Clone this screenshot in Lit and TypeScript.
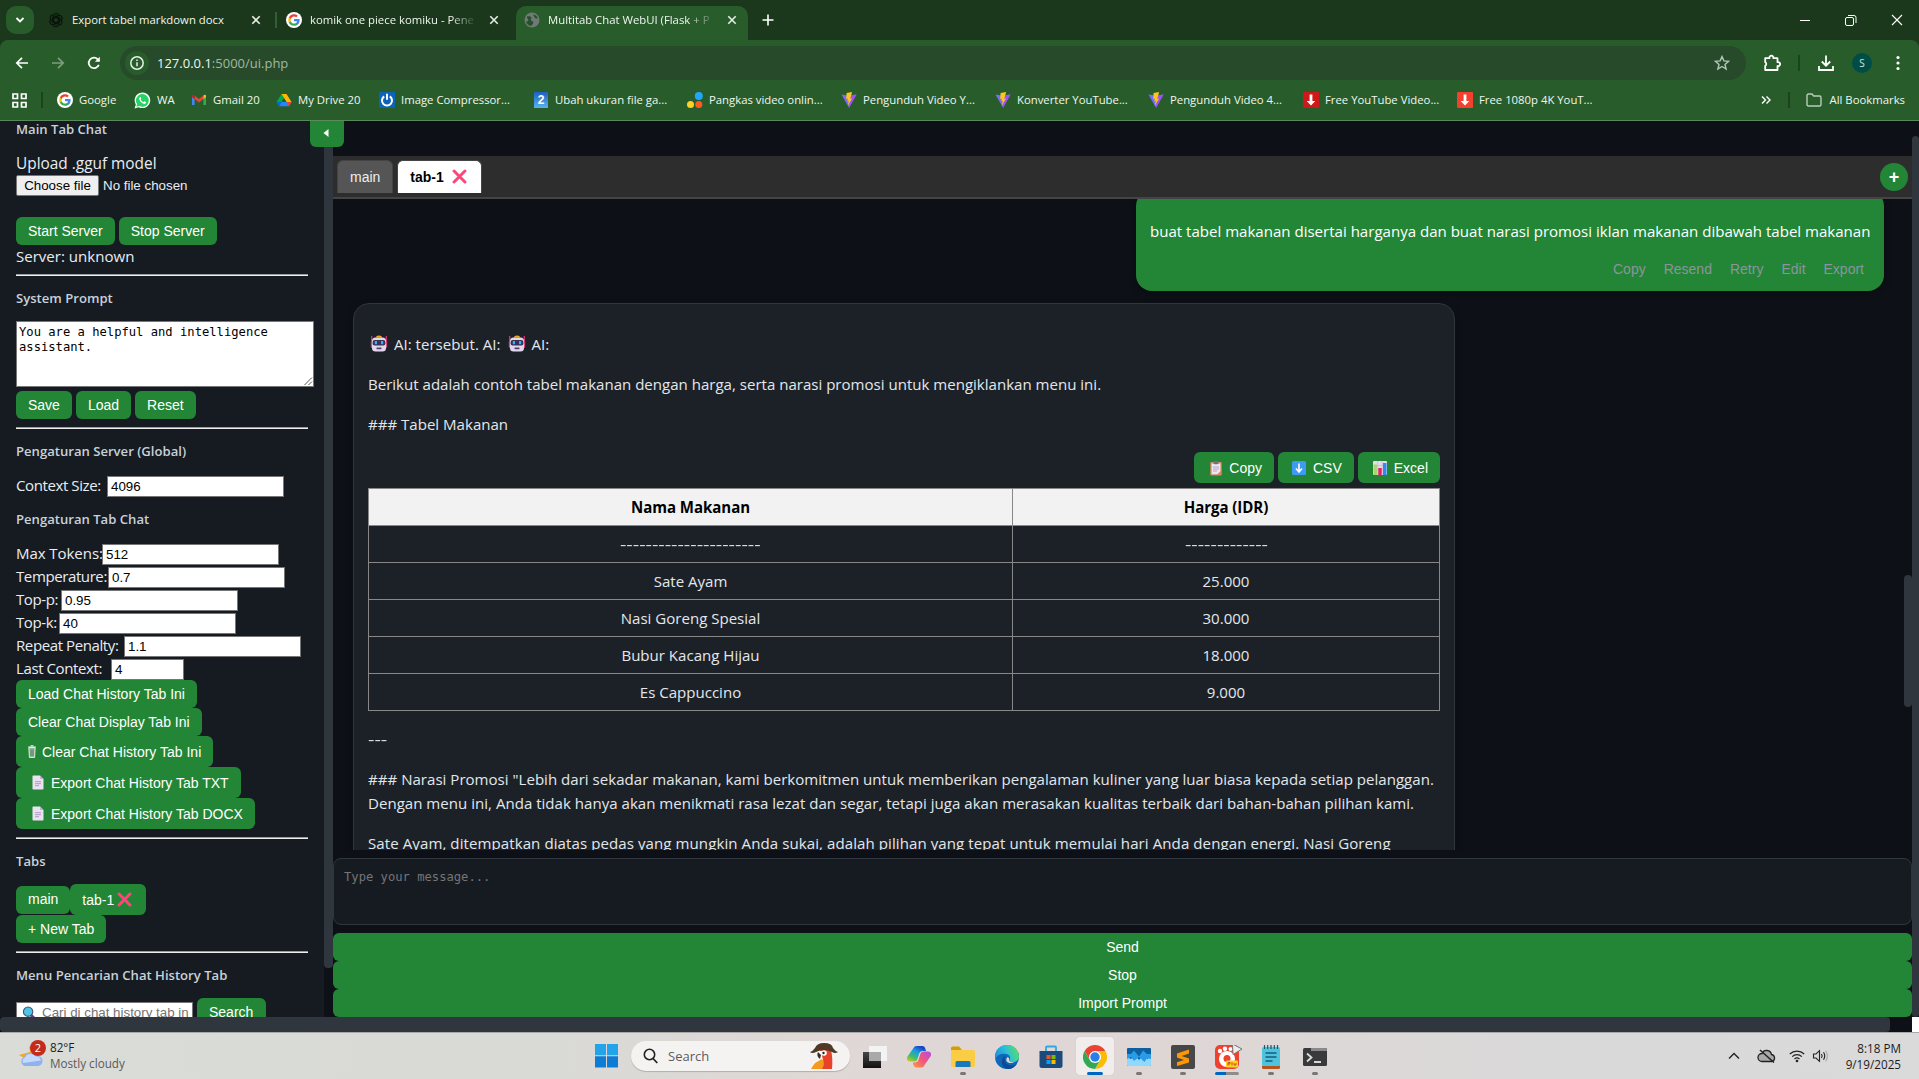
import { LitElement, html, svg, css, TemplateResult } from "lit";
import { customElement } from "lit/decorators.js";
import { classMap } from "lit/directives/class-map.js";

/* ---------- icon helpers ---------- */
const box = (w: number, h: number, vb: string, body: unknown) =>
  html`<svg width=${w} height=${h} viewBox=${vb} fill="none">${body}</svg>`;

const google = box(16, 16, "0 0 20 20", svg`
  <circle cx="10" cy="10" r="10" fill="#fff"/>
  <path d="M17 10.2c0-.5 0-1-.1-1.4H10v2.8h3.9a3.4 3.4 0 0 1-1.4 2.2v1.8h2.3c1.4-1.3 2.2-3.1 2.2-5.4z" fill="#4285f4"/>
  <path d="M10 17.2c1.9 0 3.500-.6 4.800-1.700l-2.400-1.800c-.6.4-1.400.7-2.400.7-1.900 0-3.400-1.200-4-2.900H3.600v1.900A7.200 7.200 0 0 0 10 17.200z" fill="#34a853"/>
  <path d="M6 11.500a4.300 4.300 0 0 1 0-2.900V6.700H3.600a7.200 7.200 0 0 0 0 6.600z" fill="#fbbc05"/>
  <path d="M10 5.600c1.100 0 2 .4 2.800 1.100l2-2A7.200 7.200 0 0 0 3.600 6.700L6 8.600c.6-1.800 2.100-3 4-3z" fill="#ea4335"/>`);
const openai = box(16, 16, "0 0 16 16", svg`<g stroke="#0a150b" stroke-width="1.300">
  ${[0, 60, 120, 180, 240, 300].map((a) => svg`<path transform=${`rotate(${a} 8 8)`} d="M5.400 8.200V4.200a2.900 2.900 0 0 1 5.300-1.500M5.400 6.600l3.500-2 3.300 1.900"/>`)}</g>`);
const globe = box(16, 16, "0 0 16 16", svg`<circle cx="8" cy="8" r="7.500" fill="#6f7a75"/>
  <path d="M3 4.500c2-.6 3.600-.2 4.400 1 .5 1-1 1.700-.6 2.700.5 1 2.300.6 2.500 2 .2 1.300-1 2.200-2.200 3.800C4 13.500 2.500 11.500 2 9.500c1.500.2 2.500-.4 2.300-1.600C4.200 6.800 2.600 6.400 3 4.500zM9.500 2.500c2 .4 3.600 1.700 4.200 3.700-1.200.5-2.400.2-3-.8-.5-.9-1.600-1.600-1.200-2.900z" fill="#2a4f2f"/>`);
const whatsapp = box(17, 17, "0 0 17 17", svg`<path d="M.6 16.400l1.200-4A7.800 7.800 0 1 1 4.800 15.200z" fill="#fff"/>
  <path d="M2.300 14.800l.8-2.700A6.400 6.400 0 1 1 5.200 14z" fill="#25d366"/>
  <path d="M6.200 5c-.6.200-1.100.9-1 1.800.3 2 2.700 4.700 4.900 5.100.9.100 1.700-.4 1.900-1.100l.1-.6-1.800-.9-.9.900c-1.200-.4-2.300-1.500-2.800-2.600l.7-.9L6.700 5z" fill="#fff"/>`);
const gmail = box(16, 16, "0 0 16 16", svg`<path d="M1 3.800V13h2.600V7z" fill="#4285f4"/><path d="M15 3.800V13h-2.600V7z" fill="#34a853"/>
  <path d="M3.600 3.500L8 6.900l4.400-3.400v3.600L8 10.500 3.600 7.100z" fill="#ea4335"/><path d="M1 3.800C1 2.600 2.500 2.400 3.600 3.500v3.600L1 5.300z" fill="#c5221f"/><path d="M15 3.800c0-1.200-1.500-1.400-2.600-.3v3.600L15 5.300z" fill="#fbbc04"/>`);
const drive = box(16, 16, "0 0 16 16", svg`<path d="M5.500 2L.6 10l2.500 4.200L8 6.200z" fill="#00ac47"/>
  <path d="M5.500 2h5l5 8h-5z" fill="#ffba00"/><path d="M5.600 10h9.900L13 14.200H3.100z" fill="#2684fc"/><path d="M.6 10h4.900l-2.400 4.200z" fill="#0066da"/><path d="M8 6.300L10.300 10H5.700z" fill="#285d2b"/><path d="M10.500 10h5L13 14.200z" fill="#ea4335"/>`);
const compress = box(16, 16, "0 0 16 16", svg`<rect width="16" height="16" fill="#0d63b8"/><path d="M5.200 4.400a5 5 0 1 0 5.600 0M8 1.800v6" stroke="#fff" stroke-width="2"/>`);
const two = html`<span class="two">2</span>`;
const dots3 = box(16, 16, "0 0 16 16", svg`<circle cx="11.800" cy="4" r="4" fill="#1ea7fd"/><circle cx="3.500" cy="12.500" r="3.500" fill="#ffd028"/><circle cx="11.800" cy="12.500" r="3.500" fill="#ff5a24"/>`);
const vite = box(16, 16, "0 0 16 16", svg`<path d="M.5 2.500L8 15.800l7.500-13.300L8 3.800z" fill="#7a6bff"/><path d="M10 3.400l5.500-.9L8 15.800z" fill="#a450f5"/><path d="M11 0L5.600 1.100 5.200 7l1.700-.4-.6 2.600 1.500-.4-1 5L11 6.500l-1.800.3L10.600 2z" fill="#ffc61a"/>`);
const dlRed = (c: string) => box(16, 16, "0 0 16 16", svg`<rect width="16" height="16" rx="1" fill=${c}/><path d="M8 13.500L3.700 9h2.900V2.500h2.800V9h2.900z" fill="#fff"/>`);

const X = (s: number) => box(s, s, "0 0 16 16", svg`<path d="M2.200 2.200l11.600 11.600M13.800 2.200L2.200 13.800" stroke="#f8497a" stroke-width="3.200" stroke-linecap="round"/>`);
const tabClose = box(10, 10, "0 0 10 10", svg`<path d="M1.300 1.300l7.400 7.400M8.700 1.300L1.300 8.700" stroke="#e6efe6" stroke-width="1.600"/>`);
const robot = box(18, 18, "0 0 18 18", svg`<path d="M1.700 1v8M16.300 1v8" stroke="#d8336b" stroke-width="1.300"/><rect x=".8" y="6" width="16.400" height="7" rx="1.500" fill="#d8457a"/>
  <path d="M6 2.600a3 2.200 0 0 1 6 0z" fill="#f5a623"/><rect x="2" y="2.400" width="14" height="14" rx="3.500" fill="#e3d7ee"/><rect x="2.600" y="5" width="12.800" height="5.500" rx="2" fill="#3b3154"/>
  <rect x="4.800" y="6" width="2.200" height="3.200" fill="#29b6f6"/><rect x="11" y="6" width="2.200" height="3.200" fill="#29b6f6"/><rect x="6.500" y="12.500" width="5" height="1.800" rx=".6" fill="#55406b"/>`);
const page = box(12, 15, "0 0 12 15", svg`<path d="M.5 1.200Q.5.500 1.200.500H8l3.500 3.500v9.800q0 .7-.7.700H1.200q-.7 0-.7-.7z" fill="#ece1f3"/><path d="M8 .5L11.500 4H8z" fill="#c0b0cf"/><path d="M3 6.700h6M3 8.700h6M3 10.700h4" stroke="#a795b8" stroke-width=".9"/>`);
const trash = box(8, 13, "0 0 8 13", svg`<path d="M.8 2.500h6.400l-.6 10H1.400z" fill="#8fb79a" stroke="#e6f0e6" stroke-width=".9"/><path d="M.2 2h7.600M2.500.8h3" stroke="#e6f0e6" stroke-width="1.100"/><path d="M3 4.500v6.500M5 4.500v6.500" stroke="#4a7a58" stroke-width=".9"/>`);
const clip = box(12, 15, "0 0 12 15", svg`<rect x=".3" y="1" width="11.400" height="13.600" rx="1" fill="#d98a5c"/><path d="M1.600 2.500h8.800v7.700L7.300 13.300H1.600z" fill="#efe6f4"/><rect x="3.500" y="0" width="5" height="3.200" rx="1" fill="#7b6a8a"/><path d="M3 6h6M3 8h6M3 10h4" stroke="#a795b8" stroke-width=".8"/>`);
const down = box(14, 14, "0 0 14 14", svg`<rect width="14" height="14" rx="1.500" fill="#3e9bf4"/><path d="M7 2.500v8M4 7.500l3 3.500 3-3.500" stroke="#fff" stroke-width="1.600"/>`);
const chart = box(14, 14, "0 0 14 14", svg`<rect width="14" height="14" rx="1" fill="#e6dcee"/><path d="M0 4.500h14M0 9h14M4.700 0v14M9.300 0v14" stroke="#bfb0cc" stroke-width=".6"/><rect x=".6" y="3.500" width="3.300" height="10.500" fill="#a5d86a"/><rect x="5.300" y="7" width="3.400" height="7" fill="#e0245e"/><rect x="10" y="2" width="3.500" height="12" fill="#2d8cf0"/>`);
const lens = box(15, 15, "0 0 16 16", svg`<path d="M9.500 9.500l5 5" stroke="#6b3a86" stroke-width="3"/><circle cx="6.500" cy="6" r="5" fill="#4fc3e8" stroke="#3b5b78" stroke-width="1.200"/>`);

/* ---------- browser chrome ---------- */
@customElement("browser-chrome")
class BrowserChrome extends LitElement {
  static styles = css`
    :host { display: block; height: 120px; background: #285d2b; border-bottom: 1px solid #5a8a5c; color: #f0f6f0;
      font: 11.330px/16px "Open Sans", sans-serif; white-space: nowrap; }
    svg { display: block; flex: none; }
    .strip { display: flex; height: 40px; background: #1b381c; padding-left: 6px; align-items: center; box-sizing: border-box; }
    .menu { width: 28px; height: 28px; border-radius: 10px; background: #285d2b; display: grid; place-items: center; margin-right: 6px; }
    .tab { display: flex; align-items: center; height: 34px; box-sizing: border-box; margin-top: 6px; padding: 0 14px 6px 8px; }
    .tab .name { margin: 0 12px 0 8px; flex: 1; overflow: hidden; }
    .tab.fade .name { -webkit-mask-image: linear-gradient(90deg, #000 84%, transparent); mask-image: linear-gradient(90deg, #000 84%, transparent); }
    .t1 { width: 235px; } .t2 { width: 239px; padding-left: 9px; padding-right: 17px; }
    .t3 { width: 232px; background: #285d2b; border-radius: 10px 10px 0 0; padding-right: 11px; }
    .sep { width: 2px; height: 16px; background: #2f6131; }
    .bar-sep { width: 2px; height: 16px; background: #1b431d; }
    .plus { margin-left: 14px; }
    .win { margin-left: auto; display: flex; align-items: center; padding-right: 16px; gap: 34.500px; }
    .tool { display: flex; align-items: center; height: 46px; padding-left: 14px; box-sizing: border-box; background: #285d2b; border-radius: 8px 8px 0 0; }
    .toolwrap { background: #1b381c; }
    .nav { display: flex; gap: 20px; width: 106px; }
    .omni { width: 1626px; height: 34px; border-radius: 17px; background: #264a2a; display: flex; align-items: center; box-sizing: border-box; padding: 0 16px 0 5px; font-size: 13px; }
    .info { width: 24px; height: 24px; border-radius: 12px; background: #285d2b; display: grid; place-items: center; margin-right: 8px; }
    .omni .path { color: #a3b8a3; }
    .omni .star { margin-left: auto; }
    .right { display: flex; align-items: center; padding-left: 17px; }
    .right .bar-sep { margin: 0 17px; }
    .avatar { width: 20px; height: 20px; border-radius: 10px; background: #004d47; font-size: 10px; line-height: 20px; text-align: center; margin: 0 24px 0 17px; color: #cfe6e0; }
    .marks { display: flex; height: 28px; align-items: center; padding-left: 12px; }
    .marks .first { margin: 0 14px 0 14px; }
    .grid { display: grid; grid-template-columns: 77px 57px 85px 103px 154px 154px 154px 154px 153px 155px 154px 150px; }
    .mark { display: flex; gap: 6px; align-items: center; }
    .two { width: 14px; height: 16px; background: linear-gradient(#1f5fc0, #58b4ee); color: #fff; font: bold 12px/16px "Liberation Sans"; text-align: center; margin: 0 1px; }
    .all { margin-left: auto; display: flex; align-items: center; padding-right: 14px; }
    .all .bar-sep { margin: 0 16px 0 17px; }
    .all span { margin-left: 8px; }
  `;
  render() {
    const marks: [TemplateResult, string][] = [
      [google, "Google"], [whatsapp, "WA"], [gmail, "Gmail 20"], [drive, "My Drive 20"], [compress, "Image Compressor..."],
      [two, "Ubah ukuran file ga..."], [dots3, "Pangkas video onlin..."], [vite, "Pengunduh Video Y..."], [vite, "Konverter YouTube..."],
      [vite, "Pengunduh Video 4..."], [dlRed("#d01818"), "Free YouTube Video..."], [dlRed("#f4402f"), "Free 1080p 4K YouT..."],
    ];
    return html`
      <div class="strip">
        <div class="menu">${box(10, 8, "0 0 10 8", svg`<path d="M1.500 2L5 5.500 8.500 2" stroke="#fff" stroke-width="1.800"/>`)}</div>
        <div class="tab t1">${openai}<span class="name">Export tabel markdown docx</span>${tabClose}</div>
        <div class="sep"></div>
        <div class="tab t2 fade">${google}<span class="name">komik one piece komiku - Pene</span>${tabClose}</div>
        <div class="tab t3 fade">${globe}<span class="name">Multitab Chat WebUI (Flask + P</span>${tabClose}</div>
        <div class="plus">${box(12, 12, "0 0 12 12", svg`<path d="M6 .5v11M.5 6h11" stroke="#fff" stroke-width="1.600"/>`)}</div>
        <div class="win">
          ${box(10, 10, "0 0 10 10", svg`<path d="M0 5.500h10" stroke="#fff"/>`)}
          ${box(12, 12, "0 0 12 12", svg`<rect x=".5" y="3.500" width="8" height="8" rx="1.500" stroke="#fff"/><path d="M3 1.500h6A2 2 0 0 1 11 3.500v5.500" stroke="#fff"/>`)}
          ${box(12, 12, "0 0 12 12", svg`<path d="M1 1l10 10M11 1L1 11" stroke="#fff" stroke-width="1.100"/>`)}
        </div>
      </div>
      <div class="toolwrap"><div class="tool">
        <div class="nav">
          ${box(16, 16, "0 0 16 16", svg`<path d="M14 8H3M8 2.800L2.800 8 8 13.200" stroke="#fff" stroke-width="1.700"/>`)}
          ${box(16, 16, "0 0 16 16", svg`<path d="M2 8h11M8 2.800L13.200 8 8 13.200" stroke="#7c9e7e" stroke-width="1.700"/>`)}
          ${box(16, 16, "0 0 16 16", svg`<path d="M12.800 9.800A5.200 5.200 0 1 1 11.700 4.300L13 5.800" stroke="#fff" stroke-width="1.800"/><path d="M13.800 1.800v4.900H8.900z" fill="#fff"/>`)}
        </div>
        <div class="omni">
          <div class="info">${box(14, 14, "0 0 14 14", svg`<circle cx="7" cy="7" r="6.200" stroke="#e8f0e8" stroke-width="1.500"/><path d="M7 6.300v4M7 3.500v1.500" stroke="#e8f0e8" stroke-width="1.500"/>`)}</div>
          <span>127.0.0.1</span><span class="path">:5000/ui.php</span>
          <div class="star">${box(16, 16, "0 0 16 16", svg`<path d="M8 1.600l1.900 4.300 4.700.4-3.600 3.100 1.100 4.600L8 11.500 3.900 14l1.100-4.600L1.400 6.300l4.700-.4z" stroke="#b4c8b5" stroke-width="1.400"/>`)}</div>
        </div>
        <div class="right">
          ${box(18, 18, "0 0 18 18", svg`<path d="M2.200 4.200h4.300a2 1.900 0 1 1 3.800 0h4.200v4a2 2 0 1 1 0 3.800v4H2.200v-4.200a2 2 0 0 0 0-3.600z" stroke="#fff" stroke-width="1.800" stroke-linejoin="round"/>`)}
          <div class="bar-sep"></div>
          ${box(18, 18, "0 0 18 18", svg`<path d="M9 1.500v10M4.800 7.500L9 11.700l4.200-4.200M2 12v4h14v-4" stroke="#fff" stroke-width="1.800"/>`)}
          <div class="avatar">S</div>
          ${box(4, 16, "0 0 4 16", svg`<circle cx="2" cy="2.500" r="1.600" fill="#fff"/><circle cx="2" cy="8" r="1.600" fill="#fff"/><circle cx="2" cy="13.500" r="1.600" fill="#fff"/>`)}
        </div>
      </div></div>
      <div class="marks">
        ${box(15, 15, "0 0 15 15", svg`<path d="M1 1h4.500v4.500H1zM9.500 1H14v4.500H9.500zM1 9.500h4.500V14H1zM9.500 9.500H14V14H9.500z" stroke="#fff" stroke-width="1.700"/>`)}
        <div class="bar-sep first"></div>
        <div class="grid">${marks.map(([i, t]) => html`<div class="mark">${i}<span>${t}</span></div>`)}</div>
        <div class="all">
          ${box(10, 10, "0 0 10 10", svg`<path d="M1 1.500L4.500 5 1 8.500M5.500 1.500L9 5 5.500 8.500" stroke="#fff" stroke-width="1.400"/>`)}
          <div class="bar-sep"></div>
          ${box(16, 14, "0 0 16 14", svg`<path d="M1 2.500Q1 1 2.500 1H6l1.700 2h5.800Q15 3 15 4.500v7q0 1.500-1.500 1.500h-11Q1 13 1 11.500z" stroke="#b9cdb9" stroke-width="1.400"/>`)}
          <span>All Bookmarks</span>
        </div>
      </div>`;
  }
}

/* ---------- sidebar ---------- */
@customElement("side-panel")
class SidePanel extends LitElement {
  static styles = css`
    :host { display: block; width: 324px; height: 896px; overflow: hidden; background: #161b22; padding: 0 16px; box-sizing: border-box;
      color: #e9edf1; font: 15.060px/22px "Open Sans", sans-serif; white-space: nowrap; }
    svg { display: block; flex: none; }
    h4 { font: 600 13.100px/18px "Open Sans", sans-serif; color: #c9d1d9; margin: 13px 0 0; height: 18px; }
    h4.top { margin-top: 0; line-height: 16px; }
    .upload { margin-top: 13px; height: 23px; font-size: 15.400px; line-height: 24px; }
    .file { display: flex; height: 21px; font: 13.330px/21px "Liberation Sans", sans-serif; margin-bottom: 21px; }
    .choose { width: 83px; box-sizing: border-box; border: 1px solid #767676; background: #efefef; color: #000; text-align: center; line-height: 19px; margin-right: 4px; border-radius: 2px; }
    .row { display: flex; gap: 4px; }
    .btn { height: 28px; box-sizing: border-box; padding: 0 12px; border-radius: 6px; background: #238636; color: #fff; font: 14px/27px "Liberation Sans", sans-serif; display: flex; align-items: center; width: max-content; }
    .btn.tall { height: 31px; line-height: 30px; }
    .status { height: 24px; line-height: 23px; margin-bottom: 5px; }
    hr { height: 2px; margin: 8px 0 0; border: 0; box-sizing: border-box; border-top: 1px solid #9a9da0; background: #eee; }
    hr.n { margin-top: 0; }
    .area { display: flex; justify-content: flex-end; align-items: flex-end; width: 298px; height: 66px; box-sizing: border-box; border: 1px solid #767676; background: #fff; color: #000; margin: 14px 0 4px; padding: 3px 0 0 2px;
      font: 12.170px/15px "DejaVu Sans Mono", monospace; }
    .area p { margin: 0; flex: 1; align-self: flex-start; white-space: pre; }
    .field { display: flex; height: 21px; margin-bottom: 2px; line-height: 19px; }
    .field span { letter-spacing: -.08px; flex: none; }
    .field span.tight { letter-spacing: -.42px; }
    .inp { width: 177px; height: 21px; box-sizing: border-box; background: #fff; border: 1px solid #767676; color: #000; font: 13.330px/19px "Liberation Sans", sans-serif; padding-left: 3px; overflow: hidden; }
    .inp.small { width: 73px; }
    .fields { margin-top: 16px; }
    .fields.single { margin-bottom: 13px; }
    .group { margin-top: -2px; }
    .tabs { display: flex; align-items: center; height: 31px; margin-top: 14px; }
    .tall.doc { padding-left: 16px; }
    .tall.doc svg { margin-right: 7px; }
    .tall.bin svg { margin-right: 6px; }
    .tall.x { padding-right: 14px; }
    .tall.x svg { margin: 0 0 0 3px; }
    .find { display: flex; gap: 4px; margin-top: 14px; }
    .find .inp { margin-top: 4px; color: #757575; display: flex; gap: 5px; padding-left: 5px; font-size: 13.330px; }
    .find .inp svg { margin-top: 3px; }
    .find .btn { padding-right: 13px; }
  `;
  field(label: string, w: number, value: string, small = false) {
    const tight = label.length * 7.7 > w;
    return html`<div class="field"><span class=${classMap({ tight })} style="width:${w}px">${label}</span><div class=${classMap({ inp: true, small })}>${value}</div></div>`;
  }
  render() {
    return html`
      <h4 class="top">Main Tab Chat</h4>
      <div class="upload">Upload .gguf model</div>
      <div class="file"><div class="choose">Choose file</div>No file chosen</div>
      <div class="row"><div class="btn">Start Server</div><div class="btn">Stop Server</div></div>
      <div class="status">Server: unknown</div>
      <hr class="n" />
      <h4>System Prompt</h4>
      <div class="area"><p>You are a helpful and intelligence
assistant.</p>${box(10, 10, "0 0 10 10", svg`<path d="M1.500 9L9 1.500M5.500 9L9 5.500" stroke="#555"/>`)}</div>
      <div class="row"><div class="btn">Save</div><div class="btn">Load</div><div class="btn">Reset</div></div>
      <hr />
      <h4>Pengaturan Server (Global)</h4>
      <div class="fields single">${this.field("Context Size:", 91, "4096")}</div>
      <h4>Pengaturan Tab Chat</h4>
      <div class="fields">
        ${this.field("Max Tokens:", 86, "512")} ${this.field("Temperature:", 92, "0.7")} ${this.field("Top-p:", 45, "0.95")}
        ${this.field("Top-k:", 43, "40")} ${this.field("Repeat Penalty:", 108, "1.1")} ${this.field("Last Context:", 95, "4", true)}
      </div>
      <div class="group">
        <div class="btn">Load Chat History Tab Ini</div>
        <div class="btn">Clear Chat Display Tab Ini</div>
        <div class="btn tall bin">${trash}Clear Chat History Tab Ini</div>
        <div class="btn tall doc">${page}Export Chat History Tab TXT</div>
        <div class="btn tall doc">${page}Export Chat History Tab DOCX</div>
      </div>
      <hr />
      <h4>Tabs</h4>
      <div class="tabs"><div class="btn">main</div><div class="btn tall x">tab-1${X(15)}</div></div>
      <div class="btn">+ New Tab</div>
      <hr />
      <h4>Menu Pencarian Chat History Tab</h4>
      <div class="find"><div class="inp">${lens}Cari di chat history tab in</div><div class="btn">Search</div></div>`;
  }
}

/* ---------- chat workspace ---------- */
@customElement("chat-main")
class ChatMain extends LitElement {
  static styles = css`
    :host { display: flex; flex-direction: column; width: 1579px; height: 896px; background: #0d1117; color: #e3e7eb; white-space: nowrap;
      font: 15.060px/24px "Open Sans", sans-serif; overflow: hidden; }
    svg { display: block; flex: none; }
    .tabbar { margin-top: 35px; height: 43px; box-sizing: border-box; background: #2d2d2d; border-bottom: 2px solid #444; display: flex; padding: 4px 4px 0; font: 14px/33px "Liberation Sans", sans-serif; flex: none; }
    .tab { height: 33px; box-sizing: border-box; border: 1px solid #444; border-bottom: 0; border-radius: 6px 6px 0 0; background: #555; color: #eee; padding: 0 12px; margin-right: 4px; display: flex; }
    .tab.on { background: #fff; color: #000; font-weight: bold; padding-right: 14px; }
    .tab.on svg { margin: 8px 0 0 8px; }
    .add { margin: 3px 0 0 auto; width: 28px; height: 28px; border-radius: 14px; background: #238636; color: #fff; font: bold 18px/29px "Liberation Sans"; text-align: center; }
    .view { display: flex; height: 651px; flex: none; overflow: hidden; }
    .feed { flex: 1; display: flex; flex-direction: column; padding: 0 20px; overflow: hidden; }
    .user { margin-top: -9px; align-self: flex-end; width: 748px; height: 101px; flex: none; box-sizing: border-box; border-radius: 16px; background: #238636; color: #fff; padding: 29px 14px 0; box-shadow: 0 2px 6px rgba(0,0,0,.4); }
    .acts { display: flex; justify-content: flex-end; gap: 18px; font: 14px/20px "Liberation Sans"; color: #8b949e; padding: 16px 6px 0 0; }
    .ai { margin-top: 12px; width: 1102px; flex: none; box-sizing: border-box; border: 1px solid #30363d; border-radius: 16px; background: #1c2128; padding: 12px 14px 13px; box-shadow: 0 2px 6px rgba(0,0,0,.3); }
    p { margin: 16px 0; height: 24px; }
    p.two { height: 48px; letter-spacing: .015px; }
    p.last { letter-spacing: .08px; }
    p.first { display: flex; align-items: center; }
    p.first svg { margin: 0 6px 0 2px; }
    p.first .n { margin-left: 5px; }
    .dash { display: inline-block; transform: scaleX(1.32); }
    p .dash { transform-origin: left; }
    .tools { display: flex; gap: 4px; justify-content: flex-end; height: 31px; }
    .btn { height: 31px; border-radius: 6px; background: #238636; color: #fff; display: flex; align-items: center; gap: 7px; padding: 1px 12px 0 15px; font: 14px/30px "Liberation Sans"; box-sizing: border-box; }
    .btn.cp { padding-left: 16px; } .btn.csv { padding-left: 14px; }
    table { width: 1072px; border-collapse: collapse; margin-top: 5px; table-layout: fixed; }
    td, th { height: 37px; box-sizing: border-box; padding: 0; border: 1px solid #888; text-align: center; }
    th { background: #f2f2f2; color: #000; font-weight: 700; letter-spacing: -.05px; }
    col.a { width: 644px; }
    .compose { margin: 8px 0 8px; height: 67px; flex: none; box-sizing: border-box; border: 1px solid #30363d; border-radius: 8px; background: #161b22; padding: 11px 10px; font: 12.170px/15px "DejaVu Sans Mono", monospace; color: #757575; }
    .wide { height: 28px; flex: none; border-radius: 6px; background: #238636; color: #fff; text-align: center; font: 14px/28px "Liberation Sans"; }
    .bar { width: 8px; padding-top: 376px; }
    .thumb { height: 132px; border-radius: 4px; background: #30363d; }
  `;
  render() {
    const rows = [["----------------------", "-------------"], ["Sate Ayam", "25.000"], ["Nasi Goreng Spesial", "30.000"], ["Bubur Kacang Hijau", "18.000"], ["Es Cappuccino", "9.000"]];
    return html`
      <div class="tabbar"><div class="tab">main</div><div class="tab on">tab-1${X(15)}</div><div class="add">+</div></div>
      <div class="view">
        <div class="feed">
          <div class="user">buat tabel makanan disertai harganya dan buat narasi promosi iklan makanan dibawah tabel makanan
            <div class="acts">${["Copy", "Resend", "Retry", "Edit", "Export"].map((a) => html`<span>${a}</span>`)}</div>
          </div>
          <div class="ai">
            <p class="first">${robot}<span>AI: tersebut. AI:</span><span class="n"></span>${robot}<span>AI:</span></p>
            <p>Berikut adalah contoh tabel makanan dengan harga, serta narasi promosi untuk mengiklankan menu ini.</p>
            <p>### Tabel Makanan</p>
            <div class="tools"><div class="btn cp">${clip}Copy</div><div class="btn csv">${down}CSV</div><div class="btn">${chart}Excel</div></div>
            <table><colgroup><col class="a" /><col /></colgroup>
              <tr><th>Nama Makanan</th><th>Harga (IDR)</th></tr>
              ${rows.map((r, i) => html`<tr>${r.map((c) => html`<td><span class=${classMap({ dash: i === 0 })}>${c}</span></td>`)}</tr>`)}
            </table>
            <p><span class="dash">---</span></p>
            <p class="two">### Narasi Promosi "Lebih dari sekadar makanan, kami berkomitmen untuk memberikan pengalaman kuliner yang luar biasa kepada setiap pelanggan.<br />Dengan menu ini, Anda tidak hanya akan menikmati rasa lezat dan segar, tetapi juga akan merasakan kualitas terbaik dari bahan-bahan pilihan kami.</p>
            <p class="last">Sate Ayam, ditempatkan diatas pedas yang mungkin Anda sukai, adalah pilihan yang tepat untuk memulai hari Anda dengan energi. Nasi Goreng</p>
          </div>
        </div>
        <div class="bar"><div class="thumb"></div></div>
      </div>
      <div class="compose">Type your message...</div>
      <div class="wide">Send</div><div class="wide">Stop</div><div class="wide">Import Prompt</div>`;
  }
}

/* ---------- desktop taskbar ---------- */
@customElement("task-bar")
class TaskBar extends LitElement {
  static styles = css`
    :host { display: flex; height: 47px; box-sizing: border-box; border-top: 1px solid #a9a9a9; align-items: center;
      background: linear-gradient(90deg, #dadcd8, #d9dad6 28%, #dfd8d5 42%, #dfd6d5 58%, #dad9d9 80%, #dadada); font: 11.700px/16px "Open Sans", sans-serif; color: #1c1c1c; white-space: nowrap; }
    svg { display: block; flex: none; }
    .weather { display: flex; width: 595px; padding-left: 18px; box-sizing: border-box; gap: 4px; align-items: center; margin-top: -2px; }
    .weather small { display: block; font-size: 11.700px; color: #5a5a5a; }
    .weather svg { margin-top: -3px; }
    .search { display: flex; width: 219px; height: 30px; border-radius: 15px; background: #f5f3f2; margin: 0 3px 0 13px; align-items: center; padding: 0 12px; box-sizing: border-box; font-size: 13px; color: #5c5c5c; box-shadow: 0 1px 1px #b5acab; }
    .search span { flex: 1; margin-left: 10px; }
    .app { width: 44px; height: 46px; display: flex; flex-direction: column; align-items: center; padding-top: 12px; box-sizing: border-box; }
    .app.on { width: 38px; height: 38px; margin: 0 3px; padding-top: 8px; border-radius: 4px; background: #f0edec; box-shadow: 0 0 1px #bbb; }
    .dot { width: 6px; height: 3px; border-radius: 2px; background: #7a7676; margin-top: 3px; }
    .dot.act { width: 16px; background: #0067c0; }
    .dot.mid { width: 24px; background: linear-gradient(90deg, #0067c0 45%, #8f8c8c 45%); }
    .tray { display: flex; margin-left: auto; align-items: center; padding-right: 18px; }
    .wifi { margin-left: 3px; }
    .clock { text-align: right; width: 57px; margin-left: 15px; margin-top: -1px; }
  `;
  render() {
    const I = (b: unknown) => box(24, 24, "0 0 24 24", b);
    const apps: [TemplateResult, string][] = [
      [I(svg`<defs><linearGradient id="v1" x1="0" y1="0" x2="0" y2="1"><stop stop-color="#454545"/><stop offset="1" stop-color="#111"/></linearGradient></defs><path d="M0 7h18v16H0z" fill="url(#v1)"/><path d="M6 1h18v15H6z" fill="#f3f3f3"/><path d="M6 7h12v9H6z" fill="#a9a9a9"/>`), ""],
      [I(svg`<defs><linearGradient id="c1" x1="0" y1="1" x2=".6" y2="0"><stop stop-color="#f5c518"/><stop offset=".35" stop-color="#3fbf6a"/><stop offset=".7" stop-color="#1c9be6"/><stop offset="1" stop-color="#1746c9"/></linearGradient><linearGradient id="c2" x1="0" y1="1" x2="1" y2="0"><stop stop-color="#ff9a3d"/><stop offset=".5" stop-color="#f0567c"/><stop offset="1" stop-color="#b04bea"/></linearGradient></defs>
        <path d="M6.500 3Q7.300 1 9.500 1h6q2 0 2.700 2.200L19 6h-3.500q-2.500 0-3.300 2.500L10.500 14q-.8 2.500-3 2.500H3Q-1 16.500.2 12z" fill="url(#c1)"/><path d="M17.500 20q-.8 2.500-3 2.500h-5Q7 22.500 6.500 20L5.800 17.500h2.500q2.500 0 3.200-2.400l1.800-6Q14 6.500 16.500 6.500H21q4 0 2.800 4.500z" fill="url(#c2)"/>`), ""],
      [I(svg`<path d="M0 3q0-1.500 1.500-1.500H8L11 5H0z" fill="#d99a06"/><path d="M0 5h22.500Q24 5 24 6.500v14q0 1.500-1.500 1.500h-21Q0 22 0 20.500z" fill="#fbcd45"/><path d="M4.500 22v-4.500Q4.500 16 6 16h12q1.500 0 1.500 1.500V22z" fill="#1a78bd"/>`), "dot"],
      [I(svg`<defs><linearGradient id="e1" x1="0" y1=".6" x2="1" y2=".3"><stop stop-color="#1e8fdd"/><stop offset=".5" stop-color="#2bc0d8"/><stop offset="1" stop-color="#5fe05a"/></linearGradient></defs><circle cx="12" cy="12" r="12" fill="#0f67b8"/><path d="M0 12A12 12 0 0 1 24 11.500c0 3.600-3 5.500-6 5.500-2.700 0-4-1-3.600-2 1.600-1.800.6-5.600-3.200-6C5 8 1 11 .5 15z" fill="url(#e1)"/><path d="M10.500 11c-2 3-.5 8.500 5 9.500 3 .3 5-.9 6.300-2C18 26 8.500 25.500 7 19c-.8-4 1-7.500 3.500-8z" fill="#0a4a96"/><path d="M14 15.500q2 2.500 6 1-2.500 2-5.500 1.500-4-1-3-4.500.5-1.500 1.500-1.500 2 1.500 1 3.500z" fill="#e0d8d6"/>`), ""],
      [I(svg`<path d="M7 6V2.500Q7 1.500 8 1.500h8q1 0 1 1V6" stroke="#2aa9e8" stroke-width="1.800"/><path d="M.5 6h23v14.500q0 2.500-2.500 2.500H3Q.5 23 .5 20.500z" fill="#1c4a7c"/><path d="M7.500 10h4v4h-4z" fill="#f25022"/><path d="M12.500 10h4v4h-4z" fill="#7fba00"/><path d="M7.500 15h4v4h-4z" fill="#00a4ef"/><path d="M12.500 15h4v4h-4z" fill="#ffb900"/>`), ""],
      [I(svg`<circle cx="12" cy="12" r="12" fill="#fff"/><path d="M12 6h10.400A12 12 0 0 1 12 24l5.200-9z" fill="#fbbc04"/><path d="M1.600 6A12 12 0 0 0 12 24l5.200-9H6.800z" fill="#34a853"/><path d="M6.800 15L1.600 6A12 12 0 0 1 22.400 6H12z" fill="#ea4335"/><circle cx="12" cy="12" r="6" fill="#fff"/><circle cx="12" cy="12" r="4.700" fill="#2b7de9"/>`), "on"],
      [I(svg`<rect y="3" width="24" height="18" rx="1" fill="#0d5f9e"/><path d="M0 12l4 2 4-4 4 5 5-6 3 5 4-2v8q0 1-1 1H1q-1 0-1-1z" fill="#8fd8ff"/><path d="M0 9h4l3-3.500 5 6 4-6L20 9h4v5l-4-1-2.500 4-5.500-5-5 4-3-4-4 2z" fill="#2a9be6"/>`), "dot"],
      [I(svg`<rect width="24" height="24" rx="2" fill="#474747"/><path d="M18 4.500v4l-7.500 2.400 7.500 2.600v4L6 21v-3.800l7-2.300-7-2.400V8.500z" fill="#ff9800"/>`), "dot"],
      [box(30, 24, "-3 0 30 24", svg`<rect width="24" height="24" rx="5" fill="#ef4130"/><ellipse cx="12" cy="14" rx="8" ry="8" fill="#fff"/><circle cx="12" cy="13.500" r="3.500" fill="#ef4130"/><circle cx="5" cy="6" r="2.200" fill="#fff"/><circle cx="10" cy="3.800" r="2.200" fill="#fff"/><circle cx="15.500" cy="4" r="2" fill="#fff"/><rect x="11" y="15.500" width="12" height="7" rx="1" fill="#ffd21f"/><path d="M13 20.500v-3h2v1.500h-2M17 17v3.500M19 18v2h2v-2" stroke="#b33" stroke-width=".8"/><path d="M17.500-1L27 4l-9 5.500z" fill="#efecec" stroke="#777" stroke-width="1"/>`), "mid"],
      [I(svg`<rect x="3" y="2" width="18" height="21" rx="2" fill="#4fc3dc"/><path d="M3 21h18v1.500q0 1.500-1.500 1.500h-15Q3 24 3 22.500z" fill="#b5541c"/><path d="M5.500 0v4M8.700 0v4M12 0v4M15.300 0v4M18.500 0v4" stroke="#155a77" stroke-width="1.200"/><path d="M6.500 8h11M6.500 12h11M6.500 16h7" stroke="#135e80" stroke-width="1.600"/>`), "dot"],
      [I(svg`<rect y="3" width="24" height="18" rx="1.500" fill="#3a3a3c"/><path d="M8 3h14.500Q24 3 24 4.500V6H8z" fill="#8a8a8a"/><path d="M4 8.500l4.500 4L4 16.500" stroke="#ddd" stroke-width="1.800"/><path d="M11 17h7" stroke="#fff" stroke-width="1.600"/>`), "dot"],
    ];
    return html`
      <div class="weather">
        ${box(28, 28, "0 0 28 28", svg`<path d="M11 6l1 6-11 3 5 3-2 4 9-2 4-9z" fill="#f5a623"/><path d="M6 26a5 5 0 0 1 0-9 7 6 0 0 1 13-1 5 5 0 0 1 1 10z" fill="#8fb2ee"/><path d="M5 23a4 4 0 0 1 2-5.500 6 5 0 0 1 11-1 5 5 0 0 1 5 4z" fill="#c5dafa"/><circle cx="20" cy="8" r="8" fill="#c42b1c"/><text x="20" y="12" text-anchor="middle" font-size="11" fill="#fff">2</text>`)}
        <div>82°F<small>Mostly cloudy</small></div>
      </div>
      ${box(23, 24, "0 0 23 24", svg`<path d="M0 0h11v11.300H0zM12 0h11v11.300H12z" fill="#22a3ea"/><path d="M0 12.300h11v11.300H0zM12 12.300h11v11.300H12z" fill="#0c7cd5"/>`)}
      <div class="search">
        ${box(15, 16, "0 0 15 16", svg`<circle cx="6.500" cy="6.500" r="5.200" stroke="#222" stroke-width="1.600"/><path d="M10 10.500l4.300 4.500" stroke="#222" stroke-width="1.800"/>`)}
        <span>Search</span>
        ${box(28, 26, "0 0 28 26", svg`<path d="M10 7q5-4 11 0 2 8 1 19H8q-2-6 3-9-3-5-1-10z" fill="#e8432a"/><path d="M1 26q4-8 12-10 2 6-1 10z" fill="#f59a1d"/><path d="M8 8q-2 4 2 8l3 1q-2-5-1-9z" fill="#fff"/><circle cx="14" cy="10" r="2.800" fill="#fff"/><circle cx="13.500" cy="10" r="1.200" fill="#222"/><path d="M8 9q-2 4 2 7l1-4z" fill="#3a2a20"/><path d="M0 9q3-1 5-4 2-5 9-5 8 0 9 5 2 3 5 4-3 2-6 0-8-4-16 0-4 2-6 0z" fill="#4f3a26"/>`)}
      </div>
      ${apps.map(([i, k]) => html`<div class=${classMap({ app: true, on: k === "on" })}>${i}${k ? html`<div class=${classMap({ dot: true, act: k === "on", mid: k === "mid" })}></div>` : ""}</div>`)}
      <div class="tray">
        ${box(12, 8, "0 0 12 8", svg`<path d="M1 6.500l5-5 5 5" stroke="#222" stroke-width="1.400"/>`)}
        ${box(46, 14, "0 0 46 14", svg`<path d="M22 12.500a4 4 0 0 1 0-8 5 5 0 0 1 9.500 1 3.600 3.600 0 0 1 .5 7z" fill="#a9a9a9" stroke="#222" stroke-width="1.300"/><path d="M20 1l14 12.500" stroke="#222" stroke-width="1.500"/>`)}
        <div class="wifi">${box(16, 14, "0 0 16 14", svg`<path d="M.8 5a10.500 10.500 0 0 1 14.400 0M3.200 7.600a7 7 0 0 1 9.600 0M5.500 10a3.700 3.700 0 0 1 5 0" stroke="#222" stroke-width="1.200"/><circle cx="8" cy="12" r="1.300" fill="#222"/>`)}</div>
        ${box(24, 14, "0 0 24 14", svg`<path d="M8.500 5h2.500l3.500-3.300v10.600L11 9H8.500z" stroke="#222" stroke-width="1.100"/><path d="M16.500 5q1.300 2 0 4M18.500 3.300q2.500 3.700 0 7.400" stroke="#222" stroke-width="1.100"/><path d="M20.700 1.800q3.500 5.200 0 10.400" stroke="#aaa" stroke-width="1.100"/>`)}
        <div class="clock">8:18 PM<br />9/19/2025</div>
      </div>`;
  }
}

@customElement("app-root")
class AppRoot extends LitElement {
  static styles = css`
    :host { display: flex; flex-direction: column; width: 1919px; height: 1079px; overflow: hidden; background: #0d1117; }
    browser-chrome { flex: none; }
    .page { display: flex; height: 896px; position: relative; }
    .vbar { width: 9px; background: #0d1117; }
    .vbar i { display: block; height: 847px; background: #30363d; border-radius: 0 0 4px 4px; }
    .pbar { width: 7px; padding-top: 15px; }
    .pbar i { display: block; height: 881px; background: #30363d; border-radius: 4px; }
    .toggle { position: absolute; left: 310px; top: 0; width: 32px; padding-right: 2px; height: 26px; border-radius: 0 0 6px 6px; background: #238636; display: grid; place-items: center; }
    .toggle svg { display: block; margin-top: -2px; }
    .hbar { display: flex; height: 15px; background: #0d1117; justify-content: space-between; }
    .hbar i { width: 1890px; background: #30363d; border-radius: 4px; }
    .hbar b { width: 7px; background: #fff; }
  `;
  render() {
    return html`
      <browser-chrome></browser-chrome>
      <div class="page">
        <side-panel></side-panel>
        <div class="vbar"><i></i></div>
        <chat-main></chat-main>
        <div class="pbar"><i></i></div>
        <div class="toggle">${box(6, 8, "0 0 6 8", svg`<path d="M5.500 0v8L.5 4z" fill="#fff"/>`)}</div>
      </div>
      <div class="hbar"><i></i><b></b></div>
      <task-bar></task-bar>`;
  }
}
